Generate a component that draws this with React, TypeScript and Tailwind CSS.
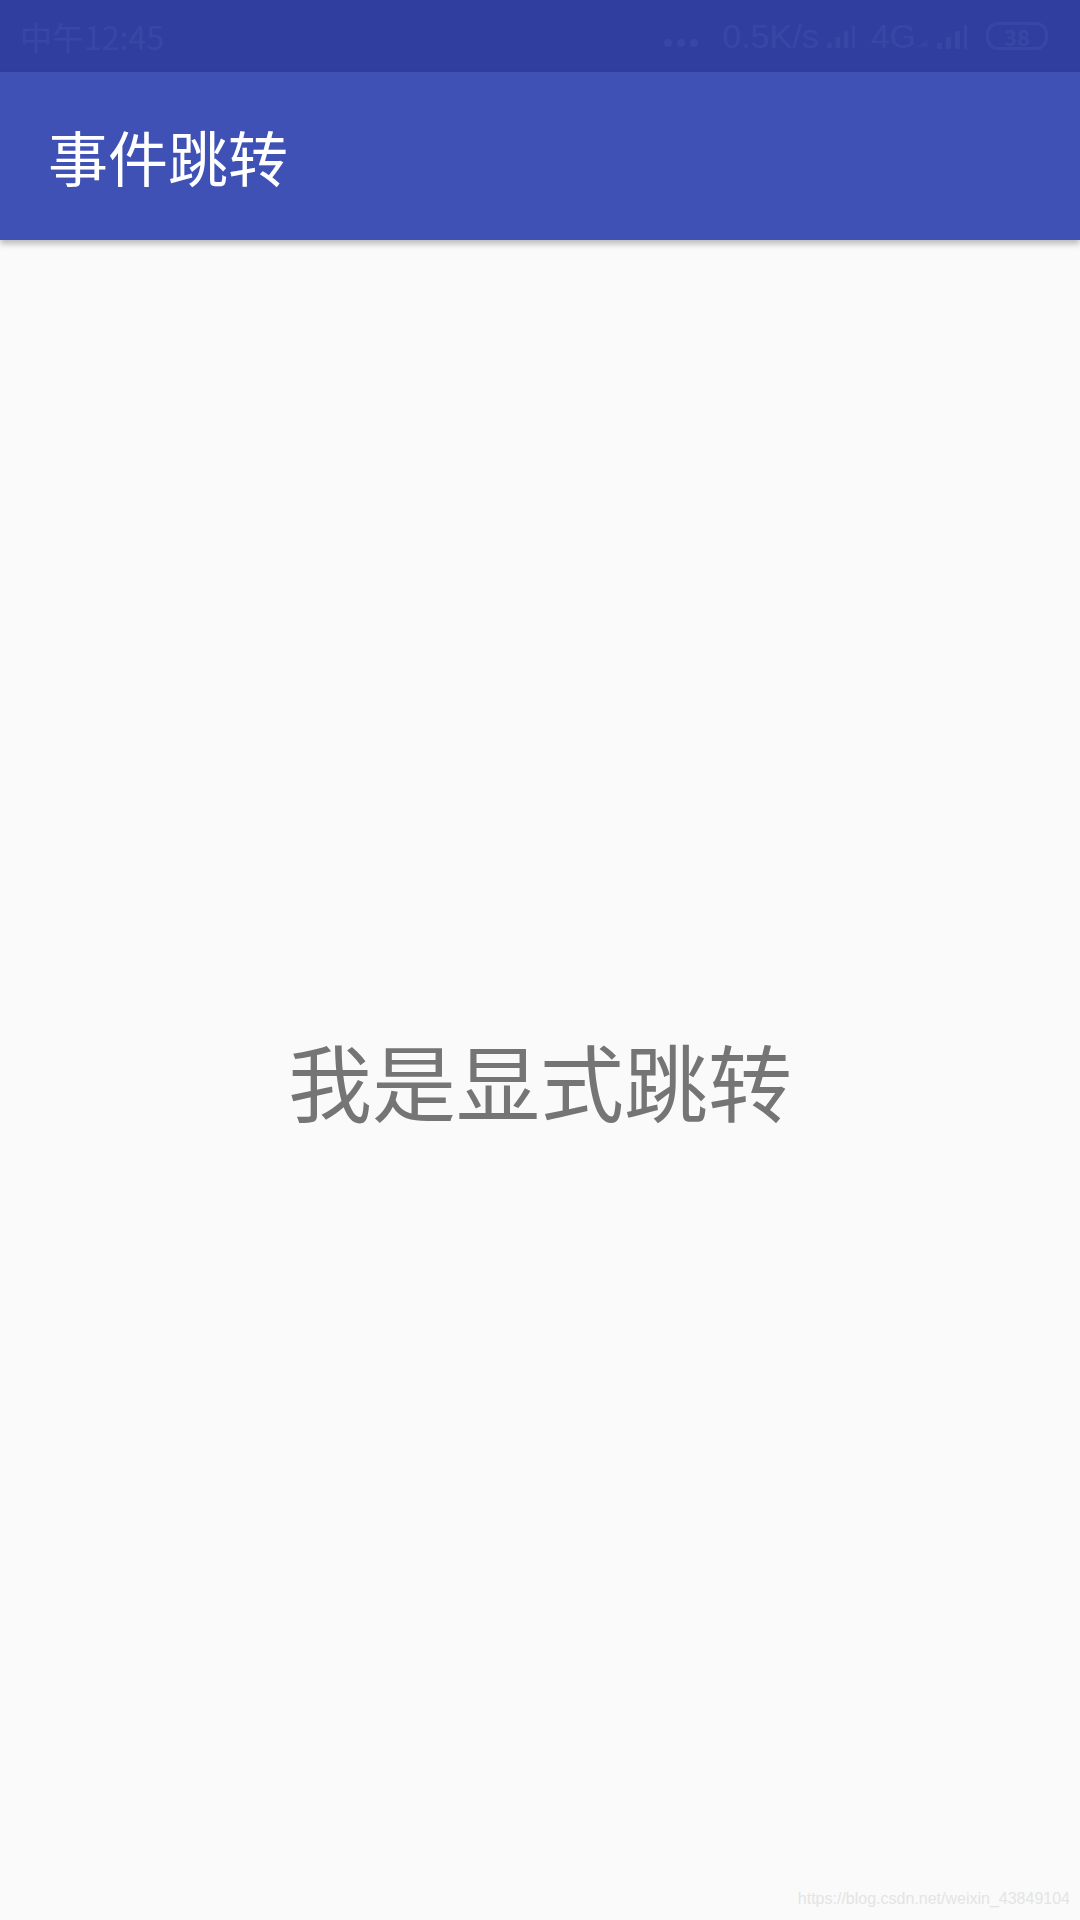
import { Fragment } from 'react';

const FONT = '"Noto Sans CJK SC", "Noto Sans", Roboto, sans-serif';

function SignalBars({ className }: { className?: string }) {
  return (
    <svg viewBox="0 0 32 26" className={className} fill="currentColor">
      <rect x="0" y="20" width="5" height="6" />
      <rect x="9" y="14" width="5" height="12" />
      <rect x="18" y="8" width="5" height="18" />
      <rect x="27" y="2" width="3" height="24" />
    </svg>
  );
}

function StatusBar() {
  return (
    <div
      className="h-[72px] bg-[#303f9f] flex items-center justify-between pl-[20px] pr-[32px] text-[#3847a6]"
      style={{ fontFamily: FONT }}
    >
      <span className="text-[32px] leading-none">中午12:45</span>
      <div className="flex items-center">
        <div className="flex gap-[5px] mr-[24px] mt-[14px]">
          {[0, 1, 2].map(i => (
            <span key={i} className="w-[8px] h-[8px] rounded-full bg-[#3847a6]" />
          ))}
        </div>
        <span className="text-[34px] leading-none" style={{ fontFamily: '"Liberation Sans", sans-serif' }}>0.5K/s</span>
        <SignalBars className="w-[30px] h-[24px] ml-[8px]" />
        <span className="text-[34px] leading-none ml-[14px]" style={{ fontFamily: '"Liberation Sans", sans-serif' }}>4G</span>
        <SignalBars className="w-[10px] h-[10px] ml-[2px] mt-[14px]" />
        <SignalBars className="w-[34px] h-[26px] ml-[8px]" />
        <div className="ml-[16px] w-[62px] h-[28px] rounded-[12px] border-[3px] border-[#3847a6] flex items-center justify-center">
          <span className="text-[22px] font-bold leading-none">38</span>
        </div>
      </div>
    </div>
  );
}

export default function App() {
  return (
    <div className="w-[1080px] h-[1920px] bg-[#fafafa] flex flex-col overflow-hidden relative" style={{ fontFamily: FONT }}>
      <StatusBar />
      <div className="relative z-10 h-[168px] bg-[#3f51b5] flex items-center pl-[48px] shadow-[0_4px_6px_rgba(0,0,0,0.25)]">
        <h1 className="text-white text-[60px] leading-none">事件跳转</h1>
      </div>
      <div className="flex-1 flex items-center justify-center">
        <p className="text-[#757575] text-[84px] leading-none">我是显式跳转</p>
      </div>
      <div className="absolute right-[10px] bottom-[9px] text-[#e4e4e4] text-[16px]" style={{ fontFamily: '"Liberation Sans", sans-serif' }}>
        https://blog.csdn.net/weixin_43849104
      </div>
    </div>
  );
}
